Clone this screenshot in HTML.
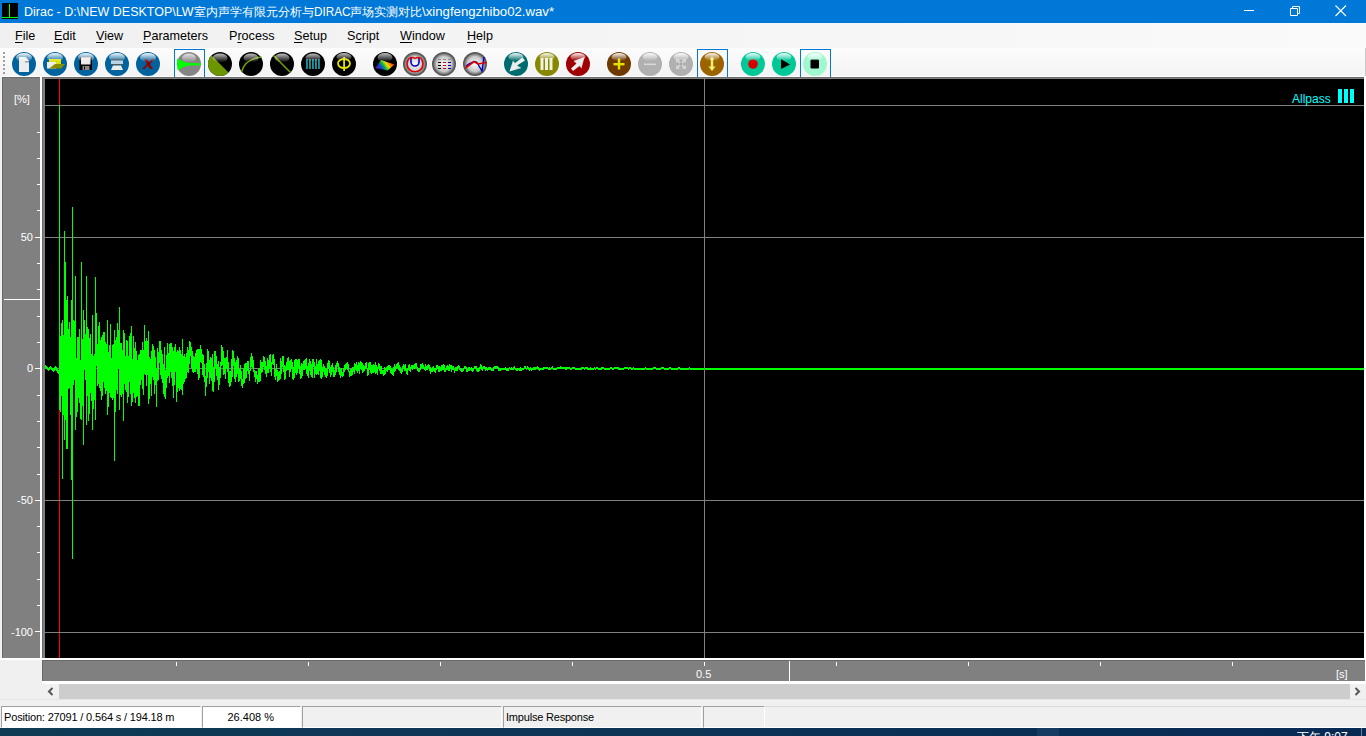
<!DOCTYPE html>
<html><head><meta charset="utf-8">
<style>
*{margin:0;padding:0;box-sizing:border-box}
html,body{width:1366px;height:736px;overflow:hidden;background:#f0f0f0;font-family:"Liberation Sans",sans-serif}
.a{position:absolute}
#title{left:0;top:0;width:1366px;height:23px;background:#0078d7;color:#fff;font-size:12px}
#title .t{left:24px;top:5px;white-space:nowrap;line-height:15px}
.cj{width:12px;text-align:center;overflow:hidden;height:15px}
#menu{left:0;top:23px;width:1366px;height:25px;background:linear-gradient(90deg,#f0f0f0,#fafafa);font-size:12.6px;color:#000}
#menu span{position:absolute;top:6px;line-height:15px;white-space:nowrap}
#menu u{text-decoration:underline;text-underline-offset:1.5px;text-decoration-thickness:1px}
#tb{left:0;top:48px;width:1366px;height:29px;background:linear-gradient(180deg,#fcfcfc,#f3f3f3 96.5%,#fff 96.5%)}
.ylab{color:#fff;font-size:11px;line-height:12px;text-align:right;width:30px;left:3px}
.st{font-size:11px;color:#000;line-height:13px;white-space:nowrap}
</style></head><body>
<div id="title" class="a">
  <svg class="a" style="left:2px;top:3px" width="16" height="16"><rect width="16" height="16" fill="#000"/><rect x="7" y="1" width="1" height="14" fill="#0f0"/><rect x="0" y="14" width="16" height="1" fill="#0f0"/></svg>
  <div class="a t" style="left:23.5px;transform-origin:0 0;transform:scaleX(1.041)">Dirac - D:\NEW DESKTOP\LW</div>
<div class="a t cj" style="left:193.5px">室</div>
<div class="a t cj" style="left:205.5px">内</div>
<div class="a t cj" style="left:217.5px">声</div>
<div class="a t cj" style="left:229.5px">学</div>
<div class="a t cj" style="left:241.5px">有</div>
<div class="a t cj" style="left:253.5px">限</div>
<div class="a t cj" style="left:265.5px">元</div>
<div class="a t cj" style="left:277.5px">分</div>
<div class="a t cj" style="left:289.5px">析</div>
<div class="a t cj" style="left:301.5px">与</div>
<div class="a t" style="left:313.5px;transform-origin:0 0;transform:scaleX(0.977)">DIRAC</div>
<div class="a t cj" style="left:350px">声</div>
<div class="a t cj" style="left:362px">场</div>
<div class="a t cj" style="left:374px">实</div>
<div class="a t cj" style="left:386px">测</div>
<div class="a t cj" style="left:398px">对</div>
<div class="a t cj" style="left:410px">比</div>
<div class="a t" style="left:422px;transform-origin:0 0;transform:scaleX(1.10)">\xingfengzhibo02.wav*</div>
  <svg class="a" style="left:1243px;top:5px" width="12" height="12"><rect x="1" y="5" width="10" height="1" fill="#fff"/></svg>
  <svg class="a" style="left:1288px;top:4px" width="14" height="14"><path d="M2.5 4.5h7v7h-7z M4.5 4.5v-2h7v7h-2" fill="none" stroke="#fff" stroke-width="1"/></svg>
  <svg class="a" style="left:1334px;top:4px" width="14" height="14"><path d="M1.5 1.5L12 12M12 1.5L1.5 12" stroke="#fff" stroke-width="1.1"/></svg>
</div>
<div id="menu" class="a">
  <span style="left:15px"><u>F</u>ile</span>
  <span style="left:54px"><u>E</u>dit</span>
  <span style="left:96px"><u>V</u>iew</span>
  <span style="left:143px"><u>P</u>arameters</span>
  <span style="left:229px">P<u>r</u>ocess</span>
  <span style="left:294px"><u>S</u>etup</span>
  <span style="left:347px">S<u>c</u>ript</span>
  <span style="left:400px"><u>W</u>indow</span>
  <span style="left:467px"><u>H</u>elp</span>
</div>
<div id="tb" class="a"><div class="a" style="left:1365px;top:0;width:1px;height:28px;background:#c8c8c8"></div>
<svg class="a" style="left:0;top:-48px" width="1366" height="80">
<defs>
<linearGradient id="gl" x1="0" y1="0" x2="0" y2="1"><stop offset="0" stop-color="#fff" stop-opacity="0.95"/><stop offset="1" stop-color="#fff" stop-opacity="0"/></linearGradient>
<linearGradient id="glb" x1="0" y1="0" x2="0" y2="1"><stop offset="0" stop-color="#fff" stop-opacity="0.75"/><stop offset="1" stop-color="#fff" stop-opacity="0"/></linearGradient>
<radialGradient id="gray" cx="0.5" cy="0.5" r="0.5"><stop offset="0" stop-color="#fafafa"/><stop offset="0.7" stop-color="#c8c8c8"/><stop offset="1" stop-color="#606060"/></radialGradient>
<linearGradient id="rb" gradientUnits="userSpaceOnUse" x1="378" y1="70" x2="392" y2="60"><stop offset="0" stop-color="#7020a0"/><stop offset="0.2" stop-color="#2030e0"/><stop offset="0.4" stop-color="#00b050"/><stop offset="0.6" stop-color="#e8e000"/><stop offset="0.8" stop-color="#ff7000"/><stop offset="1" stop-color="#e01060"/></linearGradient>
<linearGradient id="wh" x1="0" y1="0" x2="1" y2="1"><stop offset="0" stop-color="#c8d8d8"/><stop offset="0.5" stop-color="#f0f0f0"/><stop offset="1" stop-color="#c0c8c8"/></linearGradient>
</defs>
<rect x="3" y="52" width="2" height="2" fill="#a0a0a0"/>
<rect x="3" y="56" width="2" height="2" fill="#a0a0a0"/>
<rect x="3" y="60" width="2" height="2" fill="#a0a0a0"/>
<rect x="3" y="64" width="2" height="2" fill="#a0a0a0"/>
<rect x="3" y="68" width="2" height="2" fill="#a0a0a0"/>
<rect x="3" y="72" width="2" height="2" fill="#a0a0a0"/>
<circle cx="24" cy="64" r="12" fill="#00639e"/>
<path d="M19 57h6.5l3.5 3.5V72H19z" fill="#ececec"/><rect x="25" y="61" width="4" height="1.5" fill="#999"/>
<ellipse cx="24" cy="57.5" rx="8" ry="4.5" fill="url(#gl)"/>
<circle cx="55" cy="64" r="12" fill="#00639e"/>
<rect x="49" y="59" width="12" height="6" fill="#e0e000"/><rect x="47" y="62" width="9" height="6.5" fill="#ececec"/><path d="M49 68.5L55 64H65L61 68.5z" fill="#8c8c00"/>
<ellipse cx="55" cy="57.5" rx="8" ry="4.5" fill="url(#gl)"/>
<circle cx="86" cy="64" r="12" fill="#00639e"/>
<rect x="79.5" y="57" width="12.5" height="13" fill="#000"/><rect x="81" y="57" width="9.5" height="7.5" fill="#eaeaea"/><rect x="81" y="57" width="9.5" height="1" fill="#e0a0a0"/><rect x="82.5" y="66" width="7" height="4" fill="#888"/><rect x="84" y="66.5" width="1" height="3" fill="#000"/>
<ellipse cx="86" cy="57.5" rx="8" ry="4.5" fill="url(#gl)"/>
<circle cx="117" cy="64" r="12" fill="#00639e"/>
<rect x="111" y="59" width="12" height="1.5" fill="#333"/><rect x="111" y="60.5" width="12" height="4.5" fill="#b8d4e4"/><rect x="111" y="64" width="12" height="1" fill="#555"/><path d="M113 65.5H121L123 70H111z" fill="#ececec"/>
<ellipse cx="117" cy="57.5" rx="8" ry="4.5" fill="url(#gl)"/>
<circle cx="148" cy="64" r="12" fill="#00639e"/>
<path d="M144 59h3l2 3.5l3-3.5h2.5l-4.5 5l3 5h-3l-2-3.5l-3.5 3.5h-2.5l5-5z" fill="#900000"/>
<ellipse cx="148" cy="57.5" rx="8" ry="4.5" fill="url(#gl)"/>
<rect x="174.5" y="49.5" width="30" height="30" fill="none" stroke="#0078d7" stroke-width="1"/>
<rect x="697.5" y="49.5" width="30" height="30" fill="none" stroke="#0078d7" stroke-width="1"/>
<rect x="800.5" y="49.5" width="30" height="30" fill="none" stroke="#0078d7" stroke-width="1"/>
<circle cx="189" cy="64" r="12" fill="#858585"/>
<path d="M177.3 58.5C181 60 184 62.5 189 63L201 63.2V65.2L189 65.4C184 66 181 68.5 177.8 70.5Q176.5 64 177.3 58.5z" fill="#00ff00"/>
<ellipse cx="189" cy="58" rx="7" ry="4.5" fill="url(#glb)"/>
<circle cx="220" cy="64" r="12" fill="#000"/>
<path d="M211.5 55.5L228.5 72.5A12 12 0 0 1 211.5 55.5z" fill="#6b9600"/>
<ellipse cx="220" cy="58" rx="7.5" ry="4.5" fill="url(#glb)"/>
<circle cx="251" cy="64" r="12" fill="#000"/>
<path d="M241.5 72Q245 59 261.5 57" fill="none" stroke="#6fa000" stroke-width="1.5"/>
<ellipse cx="251" cy="58" rx="7.5" ry="4.5" fill="url(#glb)"/>
<circle cx="282" cy="64" r="12" fill="#000"/>
<path d="M273.5 55.5L290.5 72.5" stroke="#6fa000" stroke-width="1.6"/>
<ellipse cx="282" cy="58" rx="7.5" ry="4.5" fill="url(#glb)"/>
<circle cx="313" cy="64" r="12" fill="#000"/>
<rect x="306.2" y="59" width="1.5" height="10" fill="#28b4c0"/>
<rect x="309.2" y="59" width="1.5" height="10" fill="#28b4c0"/>
<rect x="312.2" y="59" width="1.5" height="10" fill="#28b4c0"/>
<rect x="315.2" y="59" width="1.5" height="10" fill="#28b4c0"/>
<rect x="318.2" y="59" width="1.5" height="10" fill="#28b4c0"/>
<ellipse cx="313" cy="57.5" rx="7.5" ry="4" fill="url(#glb)"/>
<circle cx="344" cy="64" r="12" fill="#000"/>
<ellipse cx="344" cy="63.5" rx="6" ry="4.5" fill="none" stroke="#e0e000" stroke-width="1.8"/><rect x="343.2" y="57" width="1.8" height="14" fill="#e0e000"/>
<ellipse cx="344" cy="57" rx="7.5" ry="4" fill="url(#glb)"/>
<circle cx="385" cy="64" r="12" fill="#000"/>
<path d="M375.5 68L381 60L394.5 64.5L387.5 70.5z" fill="url(#rb)"/>
<ellipse cx="385" cy="57.5" rx="7.5" ry="4.5" fill="url(#glb)"/>
<circle cx="415" cy="64" r="12" fill="#555"/><circle cx="415" cy="64" r="10.8" fill="url(#gray)"/>
<path d="M409 58.5A8 8 0 1 0 421 58.5" fill="none" stroke="#e00000" stroke-width="1.6"/><path d="M411 57v5a4 4 0 0 0 8 0v-5" fill="none" stroke="#0000c0" stroke-width="1.6"/><path d="M409 58.5Q412 56.5 415 58.5Q418 56.5 421 58.5" fill="none" stroke="#e00000" stroke-width="1.4"/>
<circle cx="444" cy="64" r="12" fill="#555"/><circle cx="444" cy="64" r="10.8" fill="url(#gray)"/>
<rect x="438" y="59" width="3" height="1" fill="#888"/>
<rect x="443" y="59" width="3" height="1" fill="#888"/>
<rect x="448" y="59" width="3" height="1" fill="#888"/>
<rect x="438" y="62" width="3" height="1" fill="#000"/>
<rect x="443" y="62" width="3" height="1" fill="#e00000"/>
<rect x="448" y="62" width="3" height="1" fill="#0000c0"/>
<rect x="438" y="65" width="3" height="1" fill="#000"/>
<rect x="443" y="65" width="3" height="1" fill="#e00000"/>
<rect x="448" y="65" width="3" height="1" fill="#0000c0"/>
<rect x="438" y="68" width="3" height="1" fill="#000"/>
<rect x="443" y="68" width="3" height="1" fill="#e00000"/>
<rect x="448" y="68" width="3" height="1" fill="#0000c0"/>
<circle cx="475" cy="64" r="12" fill="#555"/><circle cx="475" cy="64" r="10.8" fill="url(#gray)"/>
<path d="M466 66Q472 62 474 62Q477 61 479 66L482 71L484 57" fill="none" stroke="#0000c0" stroke-width="1.4"/><path d="M465.5 68L474 61.5L478 64L486.5 62.5" fill="none" stroke="#e00000" stroke-width="1.6"/>
<circle cx="516" cy="64" r="12" fill="#006b6e"/>
<path d="M522.5 57.5L525 60.5L517 65.5L521.5 68L509.5 71.5L513 60.5L515 63z" fill="url(#wh)"/>
<ellipse cx="516" cy="57" rx="7.5" ry="4" fill="url(#gl)"/>
<circle cx="547" cy="64" r="12" fill="#878700"/>
<rect x="540.5" y="58" width="3" height="12" fill="#f2f2e0"/>
<rect x="545.0" y="58" width="3" height="12" fill="#f2f2e0"/>
<rect x="549.5" y="58" width="3" height="12" fill="#f2f2e0"/>
<ellipse cx="547" cy="57" rx="7.5" ry="4" fill="url(#gl)"/>
<circle cx="578" cy="64" r="12" fill="#a00000"/>
<path d="M584.5 57L581.5 68.5L579.5 66L573 71L571 68.5L576.5 63.5L573.5 61z" fill="url(#wh)"/>
<ellipse cx="578" cy="57" rx="7.5" ry="4" fill="url(#gl)"/>
<circle cx="619" cy="64" r="12" fill="#6e3a00"/>
<rect x="613.5" y="63" width="11" height="2.4" fill="#e6e000"/><rect x="617.8" y="58.5" width="2.4" height="11" fill="#e6e000"/>
<ellipse cx="619" cy="57" rx="7.5" ry="4" fill="url(#gl)"/>
<circle cx="650" cy="64" r="12" fill="#b0b0b0"/>
<rect x="644" y="63.5" width="12" height="1.6" fill="#d8d8d8"/>
<ellipse cx="650" cy="57" rx="7.5" ry="4" fill="url(#gl)"/>
<circle cx="681" cy="64" r="12" fill="#b0b0b0"/>
<path d="M676 59h4l-1.3 1.3l2.3 2.3l-1.4 1.4l-2.3-2.3l-1.3 1.3zM686 59v4l-1.3-1.3l-2.3 2.3l-1.4-1.4l2.3-2.3l-1.3-1.3zM676 69v-4l1.3 1.3l2.3-2.3l1.4 1.4l-2.3 2.3l1.3 1.3zM686 69h-4l1.3-1.3l-2.3-2.3l1.4-1.4l2.3 2.3l1.3-1.3z" fill="#d4d4d4"/><circle cx="681" cy="64" r="1.6" fill="#a8a8a8"/>
<ellipse cx="681" cy="57" rx="7.5" ry="4" fill="url(#gl)"/>
<circle cx="712" cy="64" r="12" fill="#9c6400"/>
<rect x="710.8" y="58" width="2.4" height="9" fill="#f0f070"/><path d="M708.5 66.5h7l-3.5 4.5z" fill="#f0f070"/><path d="M709.5 59.5l2.5-3l2.5 3z" fill="#f0f070"/>
<ellipse cx="712" cy="57" rx="7.5" ry="4" fill="url(#gl)"/>
<circle cx="753" cy="64" r="12" fill="#00c896"/>
<circle cx="753" cy="64" r="4.8" fill="#d80000"/>
<ellipse cx="753" cy="57" rx="7.5" ry="4" fill="url(#gl)"/>
<circle cx="784" cy="64" r="12" fill="#00c896"/>
<path d="M781 59L790 64.5L781 69z" fill="#000"/>
<ellipse cx="784" cy="57" rx="7.5" ry="4" fill="url(#gl)"/>
<circle cx="815" cy="64" r="12" fill="#a0f8d0"/>
<rect x="810.5" y="59.5" width="8.5" height="9" rx="1.2" fill="#000"/>
<ellipse cx="815" cy="57" rx="7.5" ry="4" fill="url(#gl)"/>
</svg>
</div>
<!-- left axis panel -->
<div class="a" style="left:0;top:77px;width:42px;height:583px;background:#f0f0f0"></div>
<div class="a" style="left:2px;top:77px;width:38px;height:581px;background:#808080;border-top:1px solid #6a6a6a;border-left:1px solid #6a6a6a"></div>
<div class="a" style="left:40px;top:77px;width:2px;height:583px;background:#fff"></div>
<div class="a" style="left:0;top:658px;width:42px;height:2px;background:#fff"></div>
<!-- plot -->
<div class="a" style="left:42px;top:77px;width:1324px;height:583px;background:#fff"></div>
<div class="a" style="left:42px;top:77px;width:1322px;height:581px;background:#808080;border-top:1px solid #6a6a6a;border-left:1px solid #6a6a6a"></div>
<svg class="a" style="left:0;top:0" width="1366" height="736">
  <g shape-rendering="crispEdges">
  <rect x="45" y="79" width="1319" height="579" fill="#000"/>
<rect x="59" y="79" width="1" height="579" fill="#f00"/>
<clipPath id="pc"><rect x="45" y="79" width="1319" height="579"/></clipPath>
<rect x="45" y="105" width="1319" height="1" fill="#808080"/>
<rect x="45" y="237" width="1319" height="1" fill="#808080"/>
<rect x="45" y="368" width="1319" height="1" fill="#808080"/>
<rect x="45" y="500" width="1319" height="1" fill="#808080"/>
<rect x="45" y="632" width="1319" height="1" fill="#808080"/>
<path clip-path="url(#pc)" d="M44.5 366V369M45.5 365V368M46.5 366V369M47.5 367V370M48.5 368V371M49.5 367V370M50.5 366V369M51.5 367V370M52.5 368V371M53.5 368V372M54.5 367V371M55.5 366V370M56.5 367V371M57.5 369V373M58.5 370V374M59.5 105V410M60.5 336V412M61.5 323V396M62.5 320V479M63.5 335V415M64.5 231V440M65.5 262V420M66.5 300V449M67.5 296V449M68.5 329V389M69.5 322V388M70.5 337V415M71.5 300V480M72.5 207V559M73.5 320V385M74.5 321V380M75.5 276V430M76.5 358V417M77.5 337V412M78.5 337V398M79.5 329V403M80.5 360V419M81.5 262V420M82.5 339V406M83.5 310V445M84.5 320V370M85.5 334V380M86.5 276V425M87.5 327V396M88.5 329V421M89.5 338V414M90.5 334V393M91.5 354V401M92.5 315V430M93.5 356V409M94.5 354V400M95.5 277V420M96.5 313V366M97.5 344V386M98.5 326V384M99.5 322V388M100.5 340V391M101.5 337V400M102.5 335V396M103.5 332V382M104.5 332V388M105.5 342V394M106.5 344V391M107.5 320V415M108.5 352V407M109.5 345V393M110.5 324V397M111.5 358V398M112.5 345V400M113.5 344V398M114.5 330V461M115.5 340V412M116.5 337V390M117.5 323V394M118.5 330V369M119.5 307V410M120.5 343V395M121.5 343V397M122.5 350V394M123.5 330V421M124.5 333V384M125.5 356V390M126.5 340V392M127.5 341V403M128.5 356V397M129.5 336V382M130.5 333V394M131.5 326V406M132.5 359V402M133.5 336V393M134.5 348V398M135.5 342V403M136.5 351V397M137.5 360V396M138.5 355V406M139.5 354V406M140.5 350V385M141.5 350V380M142.5 342V389M143.5 350V395M144.5 325V374M145.5 341V375M146.5 338V386M147.5 341V375M148.5 331V404M149.5 357V399M150.5 359V384M151.5 351V396M152.5 344V377M153.5 346V380M154.5 350V394M155.5 357V385M156.5 368V407M157.5 348V381M158.5 352V380M159.5 341V363M160.5 341V375M161.5 350V379M162.5 354V383M163.5 364V394M164.5 347V397M165.5 370V399M166.5 355V388M167.5 343V378M168.5 353V376M169.5 344V383M170.5 343V372M171.5 343V378M172.5 347V386M173.5 351V398M174.5 347V385M175.5 344V372M176.5 352V402M177.5 350V392M178.5 351V388M179.5 347V391M180.5 350V389M181.5 354V390M182.5 339V395M183.5 356V384M184.5 354V382M185.5 357V379M186.5 353V378M187.5 347V372M188.5 350V373M189.5 341V364M190.5 342V356M191.5 347V368M192.5 351V372M193.5 356V373M194.5 357V372M195.5 353V372M196.5 350V369M197.5 349V374M198.5 349V380M199.5 349V378M200.5 345V362M201.5 349V363M202.5 354V375M203.5 355V377M204.5 364V382M205.5 376V396M206.5 363V387M207.5 349V378M208.5 351V372M209.5 360V384M210.5 357V378M211.5 358V381M212.5 354V391M213.5 367V392M214.5 351V382M215.5 351V368M216.5 356V376M217.5 364V380M218.5 361V390M219.5 367V385M220.5 362V378M221.5 345V366M222.5 347V365M223.5 351V375M224.5 358V374M225.5 358V379M226.5 357V369M227.5 350V372M228.5 362V383M229.5 371V387M230.5 371V386M231.5 359V382M232.5 350V377M233.5 351V366M234.5 358V379M235.5 362V382M236.5 360V377M237.5 356V374M238.5 358V382M239.5 369V381M240.5 365V379M241.5 371V386M242.5 379V388M243.5 368V384M244.5 364V383M245.5 363V379M246.5 363V378M247.5 361V371M248.5 361V374M249.5 370V381M250.5 357V371M251.5 353V367M252.5 356V368M253.5 360V372M254.5 370V377M255.5 371V382M256.5 371V379M257.5 375V384M258.5 369V382M259.5 368V382M260.5 360V381M261.5 362V373M262.5 362V372M263.5 356V367M264.5 357V370M265.5 361V374M266.5 366V377M267.5 358V373M268.5 360V373M269.5 355V369M270.5 354V372M271.5 362V376M272.5 355V364M273.5 354V365M274.5 359V377M275.5 369V380M276.5 364V376M277.5 370V382M278.5 372V381M279.5 371V380M280.5 358V379M281.5 361V374M282.5 356V367M283.5 356V372M284.5 365V380M285.5 366V379M286.5 362V371M287.5 358V370M288.5 357V370M289.5 361V377M290.5 360V372M291.5 359V369M292.5 362V379M293.5 367V380M294.5 360V378M295.5 359V373M296.5 359V375M297.5 360V373M298.5 359V369M299.5 359V374M300.5 366V379M301.5 363V378M302.5 364V376M303.5 361V370M304.5 360V370M305.5 359V369M306.5 358V374M307.5 366V376M308.5 363V378M309.5 359V371M310.5 361V375M311.5 364V377M312.5 359V378M313.5 359V367M314.5 362V378M315.5 366V374M316.5 359V375M317.5 364V374M318.5 361V375M319.5 360V371M320.5 359V378M321.5 360V379M322.5 367V377M323.5 364V372M324.5 366V375M325.5 368V377M326.5 369V378M327.5 363V376M328.5 360V369M329.5 361V373M330.5 367V377M331.5 365V375M332.5 363V372M333.5 367V377M334.5 370V377M335.5 365V375M336.5 363V372M337.5 361V367M338.5 363V372M339.5 367V375M340.5 369V378M341.5 368V376M342.5 372V377M343.5 368V376M344.5 365V372M345.5 364V370M346.5 363V369M347.5 362V370M348.5 364V372M349.5 371V377M350.5 369V376M351.5 369V376M352.5 367V375M353.5 367V372M354.5 363V374M355.5 364V370M356.5 362V371M357.5 365V373M358.5 362V371M359.5 363V374M360.5 361V369M361.5 362V370M362.5 363V373M363.5 365V372M364.5 366V371M365.5 363V369M366.5 362V369M367.5 368V376M368.5 363V375M369.5 362V370M370.5 362V373M371.5 365V374M372.5 365V373M373.5 364V373M374.5 365V372M375.5 362V374M376.5 365V373M377.5 367V375M378.5 363V369M379.5 364V371M380.5 366V374M381.5 366V374M382.5 370V374M383.5 370V376M384.5 367V375M385.5 368V374M386.5 367V371M387.5 366V372M388.5 365V370M389.5 365V370M390.5 366V373M391.5 368V374M392.5 369V375M393.5 367V376M394.5 364V372M395.5 366V371M396.5 364V369M397.5 363V368M398.5 362V370M399.5 365V371M400.5 367V373M401.5 369V374M402.5 366V372M403.5 364V369M404.5 365V371M405.5 364V371M406.5 369V374M407.5 368V375M408.5 365V370M409.5 364V371M410.5 367V372M411.5 365V369M412.5 365V370M413.5 365V369M414.5 364V369M415.5 363V368M416.5 363V368M417.5 367V371M418.5 368V372M419.5 368V372M420.5 364V370M421.5 364V368M422.5 363V368M423.5 365V369M424.5 367V370M425.5 364V371M426.5 366V370M427.5 365V370M428.5 364V368M429.5 365V371M430.5 367V374M431.5 368V372M432.5 367V372M433.5 366V371M434.5 368V372M435.5 368V373M436.5 365V370M437.5 365V369M438.5 366V372M439.5 366V372M440.5 367V371M441.5 365V371M442.5 365V370M443.5 364V370M444.5 365V372M445.5 368V372M446.5 366V370M447.5 365V370M448.5 366V371M449.5 364V371M450.5 365V369M451.5 365V372M452.5 366V370M453.5 366V370M454.5 369V373M455.5 367V371M456.5 367V371M457.5 366V371M458.5 365V368M459.5 366V370M460.5 368V371M461.5 369V372M462.5 369V372M463.5 368V371M464.5 366V369M465.5 366V369M466.5 367V372M467.5 369V372M468.5 367V371M469.5 367V371M470.5 368V370M471.5 367V371M472.5 368V372M473.5 368V371M474.5 366V369M475.5 366V369M476.5 366V371M477.5 368V372M478.5 368V372M479.5 367V371M480.5 364V369M481.5 365V370M482.5 367V371M483.5 366V369M484.5 366V369M485.5 367V371M486.5 367V370M487.5 368V371M488.5 367V370M489.5 367V370M490.5 367V370M491.5 368V371M492.5 369V371M493.5 367V371M494.5 366V369M495.5 366V369M496.5 366V368M497.5 366V369M498.5 367V371M499.5 368V371M500.5 368V371M501.5 368V370M502.5 368V370M503.5 368V370M504.5 368V370M505.5 367V370M506.5 368V371M507.5 369V371M508.5 368V371M509.5 367V369M510.5 368V370M511.5 367V370M512.5 368V370M513.5 367V370M514.5 366V369M515.5 368V370M516.5 369V371M517.5 368V371M518.5 368V370M519.5 368V371M520.5 367V371M521.5 368V371M522.5 368V370M523.5 368V370M524.5 366V369M525.5 366V369M526.5 368V370M527.5 366V369M528.5 367V370M529.5 368V371M530.5 367V370M531.5 368V371M532.5 368V370M533.5 367V370M534.5 367V370M535.5 367V370M536.5 367V369M537.5 366V369M538.5 367V370M539.5 368V371M540.5 368V370M541.5 368V370M542.5 368V370M543.5 367V370M544.5 367V369M545.5 367V369M546.5 367V369M547.5 367V369M548.5 368V370M549.5 367V370M550.5 368V370M551.5 367V369M552.5 366V369M553.5 368V370M554.5 368V370M555.5 368V370M556.5 368V370M557.5 367V369M558.5 367V369M559.5 367V369M560.5 366V369M561.5 367V369M562.5 367V369M563.5 367V369M564.5 367V369M565.5 367V370M566.5 367V370M567.5 367V369M568.5 367V369M569.5 367V369M570.5 368V370M571.5 368V370M572.5 367V369M573.5 367V369M574.5 367V369M575.5 368V370M576.5 368V370M577.5 368V370M578.5 368V370M579.5 368V370M580.5 368V370M581.5 367V370M582.5 367V369M583.5 367V369M584.5 368V370M585.5 367V369M586.5 367V369M587.5 367V370M588.5 368V370M589.5 368V370M590.5 367V370M591.5 368V370M592.5 368V370M593.5 368V370M594.5 367V369M595.5 368V370M596.5 367V369M597.5 367V369M598.5 368V370M599.5 368V370M600.5 368V370M601.5 367V370M602.5 367V369M603.5 367V369M604.5 368V370M605.5 368V370M606.5 368V370M607.5 368V370M608.5 368V370M609.5 368V370M610.5 367V369M611.5 367V369M612.5 368V370M613.5 368V370M614.5 367V369M615.5 367V369M616.5 367V369M617.5 367V369M618.5 367V370M619.5 368V370M620.5 368V370M621.5 368V370M622.5 368V370M623.5 368V370M624.5 367V369M625.5 367V369M626.5 367V369M627.5 367V369M628.5 368V370M629.5 367V369M630.5 367V369M631.5 368V370M632.5 368V370M633.5 367V369M634.5 368V370M635.5 368V370M636.5 368V370M637.5 368V370M638.5 368V370M639.5 368V370M640.5 368V370M641.5 368V370M642.5 368V370M643.5 368V370M644.5 368V370M645.5 367V369M646.5 368V370M647.5 368V370M648.5 368V370M649.5 368V370M650.5 368V370M651.5 368V370M652.5 368V370M653.5 367V369M654.5 367V369M655.5 367V369M656.5 368V370M657.5 368V370M658.5 368V370M659.5 368V370M660.5 368V370M661.5 367V369M662.5 367V369M663.5 367V369M664.5 368V370M665.5 368V370M666.5 368V370M667.5 368V370M668.5 368V370M669.5 367V369M670.5 367V369M671.5 368V370M672.5 368V370M673.5 368V370M674.5 368V370M675.5 368V370M676.5 368V370M677.5 368V370M678.5 367V369M679.5 367V369M680.5 368V370M681.5 368V370M682.5 368V370M683.5 368V370M684.5 368V370M685.5 368V370M686.5 368V370M687.5 368V370M688.5 368V370M689.5 367V369M690.5 368V370M691.5 368V370M692.5 368V370M693.5 368V370M694.5 368V370M695.5 368V370M696.5 368V370M697.5 368V370M698.5 368V370M699.5 368V370M700.5 368V370M701.5 368V370M702.5 368V370M703.5 368V370M704.5 368V370M705.5 368V370M706.5 368V370M707.5 368V370M708.5 368V370M709.5 368V370M710.5 368V370M711.5 368V370M712.5 368V370M713.5 368V370M714.5 368V370M715.5 368V370M716.5 368V370M717.5 368V370M718.5 368V370M719.5 368V370M720.5 368V370M721.5 368V370M722.5 368V370M723.5 368V370M724.5 368V370M725.5 368V370M726.5 368V370M727.5 368V370M728.5 368V370M729.5 368V370M730.5 368V370M731.5 368V370M732.5 368V370M733.5 368V370M734.5 368V370M735.5 368V370M736.5 368V370M737.5 368V370M738.5 368V370M739.5 368V370M740.5 368V370M741.5 368V370M742.5 368V370M743.5 368V370M744.5 368V370M745.5 368V370M746.5 368V370M747.5 368V370M748.5 368V370M749.5 368V370M750.5 368V370M751.5 368V370M752.5 368V370M753.5 368V370M754.5 368V370M755.5 368V370M756.5 368V370M757.5 368V370M758.5 368V370M759.5 368V370M760.5 368V370M761.5 368V370M762.5 368V370M763.5 368V370M764.5 368V370M765.5 368V370M766.5 368V370M767.5 368V370M768.5 368V370M769.5 368V370M770.5 368V370M771.5 368V370M772.5 368V370M773.5 368V370M774.5 368V370M775.5 368V370M776.5 368V370M777.5 368V370M778.5 368V370M779.5 368V370M780.5 368V370M781.5 368V370M782.5 368V370M783.5 368V370M784.5 368V370M785.5 368V370M786.5 368V370M787.5 368V370M788.5 368V370M789.5 368V370M790.5 368V370M791.5 368V370M792.5 368V370M793.5 368V370M794.5 368V370M795.5 368V370M796.5 368V370M797.5 368V370M798.5 368V370M799.5 368V370M800.5 368V370M801.5 368V370M802.5 368V370M803.5 368V370M804.5 368V370M805.5 368V370M806.5 368V370M807.5 368V370M808.5 368V370M809.5 368V370M810.5 368V370M811.5 368V370M812.5 368V370M813.5 368V370M814.5 368V370M815.5 368V370M816.5 368V370M817.5 368V370M818.5 368V370M819.5 368V370M820.5 368V370M821.5 368V370M822.5 368V370M823.5 368V370M824.5 368V370M825.5 368V370M826.5 368V370M827.5 368V370M828.5 368V370M829.5 368V370M830.5 368V370M831.5 368V370M832.5 368V370M833.5 368V370M834.5 368V370M835.5 368V370M836.5 368V370M837.5 368V370M838.5 368V370M839.5 368V370M840.5 368V370M841.5 368V370M842.5 368V370M843.5 368V370M844.5 368V370M845.5 368V370M846.5 368V370M847.5 368V370M848.5 368V370M849.5 368V370M850.5 368V370M851.5 368V370M852.5 368V370M853.5 368V370M854.5 368V370M855.5 368V370M856.5 368V370M857.5 368V370M858.5 368V370M859.5 368V370M860.5 368V370M861.5 368V370M862.5 368V370M863.5 368V370M864.5 368V370M865.5 368V370M866.5 368V370M867.5 368V370M868.5 368V370M869.5 368V370M870.5 368V370M871.5 368V370M872.5 368V370M873.5 368V370M874.5 368V370M875.5 368V370M876.5 368V370M877.5 368V370M878.5 368V370M879.5 368V370M880.5 368V370M881.5 368V370M882.5 368V370M883.5 368V370M884.5 368V370M885.5 368V370M886.5 368V370M887.5 368V370M888.5 368V370M889.5 368V370M890.5 368V370M891.5 368V370M892.5 368V370M893.5 368V370M894.5 368V370M895.5 368V370M896.5 368V370M897.5 368V370M898.5 368V370M899.5 368V370M900.5 368V370M901.5 368V370M902.5 368V370M903.5 368V370M904.5 368V370M905.5 368V370M906.5 368V370M907.5 368V370M908.5 368V370M909.5 368V370M910.5 368V370M911.5 368V370M912.5 368V370M913.5 368V370M914.5 368V370M915.5 368V370M916.5 368V370M917.5 368V370M918.5 368V370M919.5 368V370M920.5 368V370M921.5 368V370M922.5 368V370M923.5 368V370M924.5 368V370M925.5 368V370M926.5 368V370M927.5 368V370M928.5 368V370M929.5 368V370M930.5 368V370M931.5 368V370M932.5 368V370M933.5 368V370M934.5 368V370M935.5 368V370M936.5 368V370M937.5 368V370M938.5 368V370M939.5 368V370M940.5 368V370M941.5 368V370M942.5 368V370M943.5 368V370M944.5 368V370M945.5 368V370M946.5 368V370M947.5 368V370M948.5 368V370M949.5 368V370M950.5 368V370M951.5 368V370M952.5 368V370M953.5 368V370M954.5 368V370M955.5 368V370M956.5 368V370M957.5 368V370M958.5 368V370M959.5 368V370M960.5 368V370M961.5 368V370M962.5 368V370M963.5 368V370M964.5 368V370M965.5 368V370M966.5 368V370M967.5 368V370M968.5 368V370M969.5 368V370M970.5 368V370M971.5 368V370M972.5 368V370M973.5 368V370M974.5 368V370M975.5 368V370M976.5 368V370M977.5 368V370M978.5 368V370M979.5 368V370M980.5 368V370M981.5 368V370M982.5 368V370M983.5 368V370M984.5 368V370M985.5 368V370M986.5 368V370M987.5 368V370M988.5 368V370M989.5 368V370M990.5 368V370M991.5 368V370M992.5 368V370M993.5 368V370M994.5 368V370M995.5 368V370M996.5 368V370M997.5 368V370M998.5 368V370M999.5 368V370M1000.5 368V370M1001.5 368V370M1002.5 368V370M1003.5 368V370M1004.5 368V370M1005.5 368V370M1006.5 368V370M1007.5 368V370M1008.5 368V370M1009.5 368V370M1010.5 368V370M1011.5 368V370M1012.5 368V370M1013.5 368V370M1014.5 368V370M1015.5 368V370M1016.5 368V370M1017.5 368V370M1018.5 368V370M1019.5 368V370M1020.5 368V370M1021.5 368V370M1022.5 368V370M1023.5 368V370M1024.5 368V370M1025.5 368V370M1026.5 368V370M1027.5 368V370M1028.5 368V370M1029.5 368V370M1030.5 368V370M1031.5 368V370M1032.5 368V370M1033.5 368V370M1034.5 368V370M1035.5 368V370M1036.5 368V370M1037.5 368V370M1038.5 368V370M1039.5 368V370M1040.5 368V370M1041.5 368V370M1042.5 368V370M1043.5 368V370M1044.5 368V370M1045.5 368V370M1046.5 368V370M1047.5 368V370M1048.5 368V370M1049.5 368V370M1050.5 368V370M1051.5 368V370M1052.5 368V370M1053.5 368V370M1054.5 368V370M1055.5 368V370M1056.5 368V370M1057.5 368V370M1058.5 368V370M1059.5 368V370M1060.5 368V370M1061.5 368V370M1062.5 368V370M1063.5 368V370M1064.5 368V370M1065.5 368V370M1066.5 368V370M1067.5 368V370M1068.5 368V370M1069.5 368V370M1070.5 368V370M1071.5 368V370M1072.5 368V370M1073.5 368V370M1074.5 368V370M1075.5 368V370M1076.5 368V370M1077.5 368V370M1078.5 368V370M1079.5 368V370M1080.5 368V370M1081.5 368V370M1082.5 368V370M1083.5 368V370M1084.5 368V370M1085.5 368V370M1086.5 368V370M1087.5 368V370M1088.5 368V370M1089.5 368V370M1090.5 368V370M1091.5 368V370M1092.5 368V370M1093.5 368V370M1094.5 368V370M1095.5 368V370M1096.5 368V370M1097.5 368V370M1098.5 368V370M1099.5 368V370M1100.5 368V370M1101.5 368V370M1102.5 368V370M1103.5 368V370M1104.5 368V370M1105.5 368V370M1106.5 368V370M1107.5 368V370M1108.5 368V370M1109.5 368V370M1110.5 368V370M1111.5 368V370M1112.5 368V370M1113.5 368V370M1114.5 368V370M1115.5 368V370M1116.5 368V370M1117.5 368V370M1118.5 368V370M1119.5 368V370M1120.5 368V370M1121.5 368V370M1122.5 368V370M1123.5 368V370M1124.5 368V370M1125.5 368V370M1126.5 368V370M1127.5 368V370M1128.5 368V370M1129.5 368V370M1130.5 368V370M1131.5 368V370M1132.5 368V370M1133.5 368V370M1134.5 368V370M1135.5 368V370M1136.5 368V370M1137.5 368V370M1138.5 368V370M1139.5 368V370M1140.5 368V370M1141.5 368V370M1142.5 368V370M1143.5 368V370M1144.5 368V370M1145.5 368V370M1146.5 368V370M1147.5 368V370M1148.5 368V370M1149.5 368V370M1150.5 368V370M1151.5 368V370M1152.5 368V370M1153.5 368V370M1154.5 368V370M1155.5 368V370M1156.5 368V370M1157.5 368V370M1158.5 368V370M1159.5 368V370M1160.5 368V370M1161.5 368V370M1162.5 368V370M1163.5 368V370M1164.5 368V370M1165.5 368V370M1166.5 368V370M1167.5 368V370M1168.5 368V370M1169.5 368V370M1170.5 368V370M1171.5 368V370M1172.5 368V370M1173.5 368V370M1174.5 368V370M1175.5 368V370M1176.5 368V370M1177.5 368V370M1178.5 368V370M1179.5 368V370M1180.5 368V370M1181.5 368V370M1182.5 368V370M1183.5 368V370M1184.5 368V370M1185.5 368V370M1186.5 368V370M1187.5 368V370M1188.5 368V370M1189.5 368V370M1190.5 368V370M1191.5 368V370M1192.5 368V370M1193.5 368V370M1194.5 368V370M1195.5 368V370M1196.5 368V370M1197.5 368V370M1198.5 368V370M1199.5 368V370M1200.5 368V370M1201.5 368V370M1202.5 368V370M1203.5 368V370M1204.5 368V370M1205.5 368V370M1206.5 368V370M1207.5 368V370M1208.5 368V370M1209.5 368V370M1210.5 368V370M1211.5 368V370M1212.5 368V370M1213.5 368V370M1214.5 368V370M1215.5 368V370M1216.5 368V370M1217.5 368V370M1218.5 368V370M1219.5 368V370M1220.5 368V370M1221.5 368V370M1222.5 368V370M1223.5 368V370M1224.5 368V370M1225.5 368V370M1226.5 368V370M1227.5 368V370M1228.5 368V370M1229.5 368V370M1230.5 368V370M1231.5 368V370M1232.5 368V370M1233.5 368V370M1234.5 368V370M1235.5 368V370M1236.5 368V370M1237.5 368V370M1238.5 368V370M1239.5 368V370M1240.5 368V370M1241.5 368V370M1242.5 368V370M1243.5 368V370M1244.5 368V370M1245.5 368V370M1246.5 368V370M1247.5 368V370M1248.5 368V370M1249.5 368V370M1250.5 368V370M1251.5 368V370M1252.5 368V370M1253.5 368V370M1254.5 368V370M1255.5 368V370M1256.5 368V370M1257.5 368V370M1258.5 368V370M1259.5 368V370M1260.5 368V370M1261.5 368V370M1262.5 368V370M1263.5 368V370M1264.5 368V370M1265.5 368V370M1266.5 368V370M1267.5 368V370M1268.5 368V370M1269.5 368V370M1270.5 368V370M1271.5 368V370M1272.5 368V370M1273.5 368V370M1274.5 368V370M1275.5 368V370M1276.5 368V370M1277.5 368V370M1278.5 368V370M1279.5 368V370M1280.5 368V370M1281.5 368V370M1282.5 368V370M1283.5 368V370M1284.5 368V370M1285.5 368V370M1286.5 368V370M1287.5 368V370M1288.5 368V370M1289.5 368V370M1290.5 368V370M1291.5 368V370M1292.5 368V370M1293.5 368V370M1294.5 368V370M1295.5 368V370M1296.5 368V370M1297.5 368V370M1298.5 368V370M1299.5 368V370M1300.5 368V370M1301.5 368V370M1302.5 368V370M1303.5 368V370M1304.5 368V370M1305.5 368V370M1306.5 368V370M1307.5 368V370M1308.5 368V370M1309.5 368V370M1310.5 368V370M1311.5 368V370M1312.5 368V370M1313.5 368V370M1314.5 368V370M1315.5 368V370M1316.5 368V370M1317.5 368V370M1318.5 368V370M1319.5 368V370M1320.5 368V370M1321.5 368V370M1322.5 368V370M1323.5 368V370M1324.5 368V370M1325.5 368V370M1326.5 368V370M1327.5 368V370M1328.5 368V370M1329.5 368V370M1330.5 368V370M1331.5 368V370M1332.5 368V370M1333.5 368V370M1334.5 368V370M1335.5 368V370M1336.5 368V370M1337.5 368V370M1338.5 368V370M1339.5 368V370M1340.5 368V370M1341.5 368V370M1342.5 368V370M1343.5 368V370M1344.5 368V370M1345.5 368V370M1346.5 368V370M1347.5 368V370M1348.5 368V370M1349.5 368V370M1350.5 368V370M1351.5 368V370M1352.5 368V370M1353.5 368V370M1354.5 368V370M1355.5 368V370M1356.5 368V370M1357.5 368V370M1358.5 368V370M1359.5 368V370M1360.5 368V370M1361.5 368V370M1362.5 368V370M1363.5 368V370" stroke="#00ff00" stroke-width="1" fill="none"/>
<rect x="704" y="79" width="1" height="579" fill="#808080"/>
<rect x="35" y="631" width="5" height="1" fill="#fff"/>
<rect x="37" y="605" width="3" height="1" fill="#fff"/>
<rect x="37" y="579" width="3" height="1" fill="#fff"/>
<rect x="37" y="552" width="3" height="1" fill="#fff"/>
<rect x="37" y="526" width="3" height="1" fill="#fff"/>
<rect x="35" y="500" width="5" height="1" fill="#fff"/>
<rect x="37" y="474" width="3" height="1" fill="#fff"/>
<rect x="37" y="447" width="3" height="1" fill="#fff"/>
<rect x="37" y="421" width="3" height="1" fill="#fff"/>
<rect x="37" y="395" width="3" height="1" fill="#fff"/>
<rect x="35" y="368" width="5" height="1" fill="#fff"/>
<rect x="37" y="342" width="3" height="1" fill="#fff"/>
<rect x="37" y="316" width="3" height="1" fill="#fff"/>
<rect x="37" y="289" width="3" height="1" fill="#fff"/>
<rect x="37" y="263" width="3" height="1" fill="#fff"/>
<rect x="35" y="237" width="5" height="1" fill="#fff"/>
<rect x="37" y="210" width="3" height="1" fill="#fff"/>
<rect x="37" y="184" width="3" height="1" fill="#fff"/>
<rect x="37" y="158" width="3" height="1" fill="#fff"/>
<rect x="37" y="132" width="3" height="1" fill="#fff"/>
<rect x="4" y="299" width="36" height="1" fill="#fff"/>
  </g>
</svg>
<div class="a" style="left:14px;top:93px;color:#fff;font-size:11px;line-height:12px">[%]</div>
<div class="a ylab" style="top:231px">50</div>
<div class="a ylab" style="top:362px">0</div>
<div class="a ylab" style="top:494px">-50</div>
<div class="a ylab" style="top:626px">-100</div>
<!-- x axis panel -->
<div class="a" style="left:42px;top:660px;width:1324px;height:24px;background:#fff"></div>
<div class="a" style="left:42px;top:660px;width:1323px;height:21px;background:#808080;border-top:1px solid #6a6a6a;border-left:1px solid #6a6a6a"></div>
<svg class="a" style="left:0;top:0" width="1366" height="736"><g shape-rendering="crispEdges">
<rect x="176" y="662" width="1" height="4" fill="#fff"/>
<rect x="308" y="662" width="1" height="4" fill="#fff"/>
<rect x="440" y="662" width="1" height="4" fill="#fff"/>
<rect x="572" y="662" width="1" height="4" fill="#fff"/>
<rect x="704" y="662" width="1" height="4" fill="#fff"/>
<rect x="836" y="662" width="1" height="4" fill="#fff"/>
<rect x="968" y="662" width="1" height="4" fill="#fff"/>
<rect x="1100" y="662" width="1" height="4" fill="#fff"/>
<rect x="1232" y="662" width="1" height="4" fill="#fff"/>
<rect x="789" y="661" width="1" height="20" fill="#fff"/>
</g></svg>
<div class="a" style="left:696px;top:668px;color:#fff;font-size:11px;line-height:12px">0.5</div>
<div class="a" style="left:1336px;top:668px;color:#fff;font-size:11px;line-height:12px">[s]</div>
<div class="a" style="left:1292px;top:92px;color:#00ffff;font-size:12px;line-height:14px">Allpass</div>
<svg class="a" style="left:1338px;top:89px" width="17" height="14"><rect x="0" y="0" width="4" height="14" fill="#0ff"/><rect x="6" y="0" width="4" height="14" fill="#0ff"/><rect x="12" y="0" width="4" height="14" fill="#0ff"/></svg>
<!-- scrollbar -->
<div class="a" style="left:42px;top:684px;width:1324px;height:15px;background:#f0f0f0"></div>
<div class="a" style="left:59px;top:684px;width:1291px;height:15px;background:#cdcdcd"></div>
<svg class="a" style="left:46px;top:687px" width="9" height="9"><path d="M6.5 1L3 4.5L6.5 8" fill="none" stroke="#555" stroke-width="2"/></svg>
<svg class="a" style="left:1353px;top:687px" width="9" height="9"><path d="M2.5 1L6 4.5L2.5 8" fill="none" stroke="#555" stroke-width="2"/></svg>
<!-- status bar -->
<div class="a" style="left:0;top:699px;width:1366px;height:29px;background:#f0f0f0;border-top:1px solid #e6e6e6"></div>
<div class="a" style="left:1px;top:706px;width:200px;height:22px;background:#fff;border-top:1px solid #a0a0a0;border-left:1px solid #a0a0a0;border-right:1px solid #fff;border-bottom:1px solid #fff"></div>
<div class="a" style="left:202px;top:706px;width:99px;height:22px;background:#fff;border-top:1px solid #a0a0a0;border-left:1px solid #a0a0a0;border-right:1px solid #fff;border-bottom:1px solid #fff"></div>
<div class="a" style="left:302px;top:706px;width:200px;height:22px;background:#f0f0f0;border-top:1px solid #a0a0a0;border-left:1px solid #a0a0a0;border-right:1px solid #fff;border-bottom:1px solid #fff"></div>
<div class="a" style="left:503px;top:706px;width:199px;height:22px;background:#f0f0f0;border-top:1px solid #a0a0a0;border-left:1px solid #a0a0a0;border-right:1px solid #fff;border-bottom:1px solid #fff"></div>
<div class="a" style="left:703px;top:706px;width:62px;height:22px;background:#f0f0f0;border-top:1px solid #a0a0a0;border-left:1px solid #a0a0a0;border-right:1px solid #fff;border-bottom:1px solid #fff"></div>
<div class="a" style="left:765px;top:706px;width:601px;height:22px;border-top:1px solid #dadada;border-bottom:1px solid #fff"></div>
<div class="a st" style="left:4px;top:711px;letter-spacing:-0.16px">Position: 27091 / 0.564 s / 194.18 m</div>
<div class="a st" style="left:227.5px;top:711px">26.408 %</div>
<div class="a st" style="left:506px;top:711px;letter-spacing:-0.2px">Impulse Response</div>
<div class="a" style="left:0;top:728px;width:1366px;height:8px;background:linear-gradient(90deg,#0f3b55,#0c3455 50%,#072a55)"></div>
<div class="a" style="left:1037px;top:728px;width:22px;height:8px;background:#163b63"></div>
<div class="a" style="left:1361px;top:728px;width:1px;height:8px;background:#6a7f99"></div>
<div class="a" style="left:1297px;top:730px;color:#fff;font-size:12px;line-height:15px;white-space:nowrap">下午 9:07</div>
</body></html>
